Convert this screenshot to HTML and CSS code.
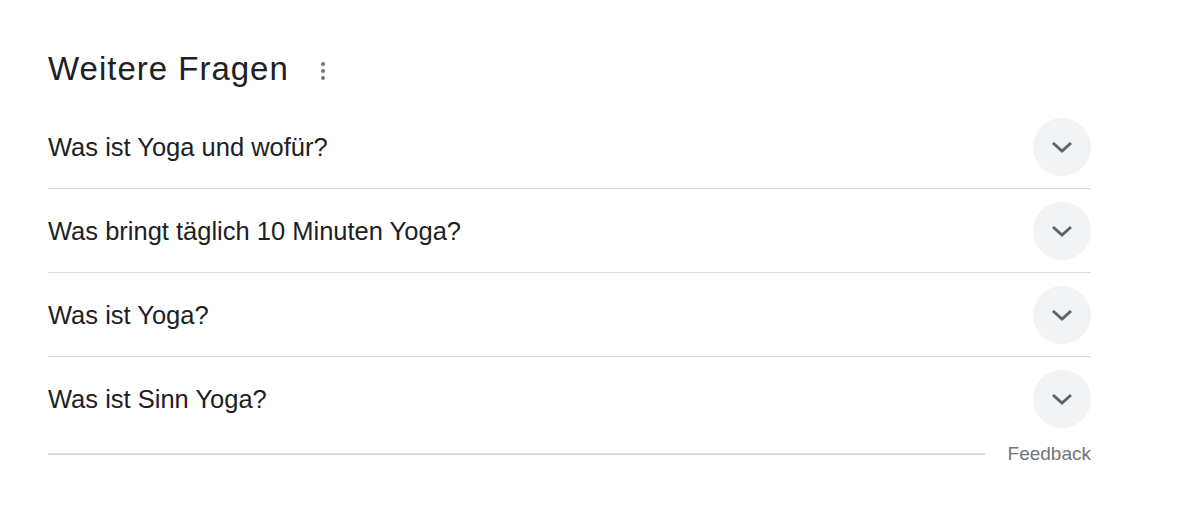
FILE: index.html
```html
<!DOCTYPE html>
<html lang="de">
<head>
  <meta charset="UTF-8">
  <meta name="viewport" content="width=device-width, initial-scale=1.0">
  <title>Weitere Fragen</title>
<link rel="stylesheet" href="styles.css">
</head>
<body>

<div class="main">
  <div class="heading">
    <h2>Weitere Fragen</h2>
    <span class="more_btn">
      <svg width="24" height="24" viewBox="0 0 24 24"><circle cx="12" cy="5" r="2"/><circle cx="12" cy="12" r="2"/><circle cx="12" cy="19" r="2"/></svg>
    </span>
  </div>

  <div class="questions">
    <div class="question">
      <span>Was ist Yoga und wofür?</span>
      <span class="toggle"><svg width="24" height="24" viewBox="0 0 24 24"><path d="M3 8l9 8 9-8"/></svg></span>
    </div>
    <div class="question">
      <span>Was bringt täglich 10 Minuten Yoga?</span>
      <span class="toggle"><svg width="24" height="24" viewBox="0 0 24 24"><path d="M3 8l9 8 9-8"/></svg></span>
    </div>
    <div class="question">
      <span>Was ist Yoga?</span>
      <span class="toggle"><svg width="24" height="24" viewBox="0 0 24 24"><path d="M3 8l9 8 9-8"/></svg></span>
    </div>
    <div class="question last">
      <span>Was ist Sinn Yoga?</span>
      <span class="toggle"><svg width="24" height="24" viewBox="0 0 24 24"><path d="M3 8l9 8 9-8"/></svg></span>
    </div>
  </div>

  <div class="footer">
    <div class="footer_line"></div>
    <a href="#">Feedback</a>
  </div>
</div>

</body>
</html>
```

FILE: styles.css
```css
*{
    padding: 0;
    margin: 0;
    box-sizing: border-box;
    font-family: 'Liberation Sans', Arial, sans-serif;
}
body{
    background: #ffffff;
    color: #202124;
}
.main{
    width: 1091px;
    padding: 45px 0 0 48px;
}

.heading{
    display: flex;
    align-items: center;
    height: 48px;
    margin-bottom: 12px;
}
.heading h2{
    font-size: 33px;
    font-weight: normal;
    line-height: 48px;
    letter-spacing: 1px;
}
.more_btn{
    display: flex;
    margin-left: 22px;
    margin-top: 3px;
}
.more_btn svg{
    fill: #70757a;
}

/* question rows */
.question{
    display: flex;
    align-items: center;
    justify-content: space-between;
    height: 84px;
    border-bottom: 1px solid #dadce0;
    font-size: 25.5px;
}
.question span:first-child{
    padding-top: 2px;
}
.question.last{
    height: 83px;
    border-bottom: none;
}
.toggle{
    width: 58px;
    height: 58px;
    border-radius: 50%;
    background: #f1f3f4;
    display: flex;
    align-items: center;
    justify-content: center;
}
.toggle svg{
    width: 24px;
    height: 24px;
    fill: none;
    stroke: #5f6368;
    stroke-width: 3;
}

.footer{
    display: flex;
    align-items: center;
    height: 28px;
    gap: 23px;
}
.footer_line{
    flex: 1;
    border-top: 2px solid #dadce0;
}
.footer a{
    color: #70757a;
    font-size: 19px;
    text-decoration: none;
}
```
